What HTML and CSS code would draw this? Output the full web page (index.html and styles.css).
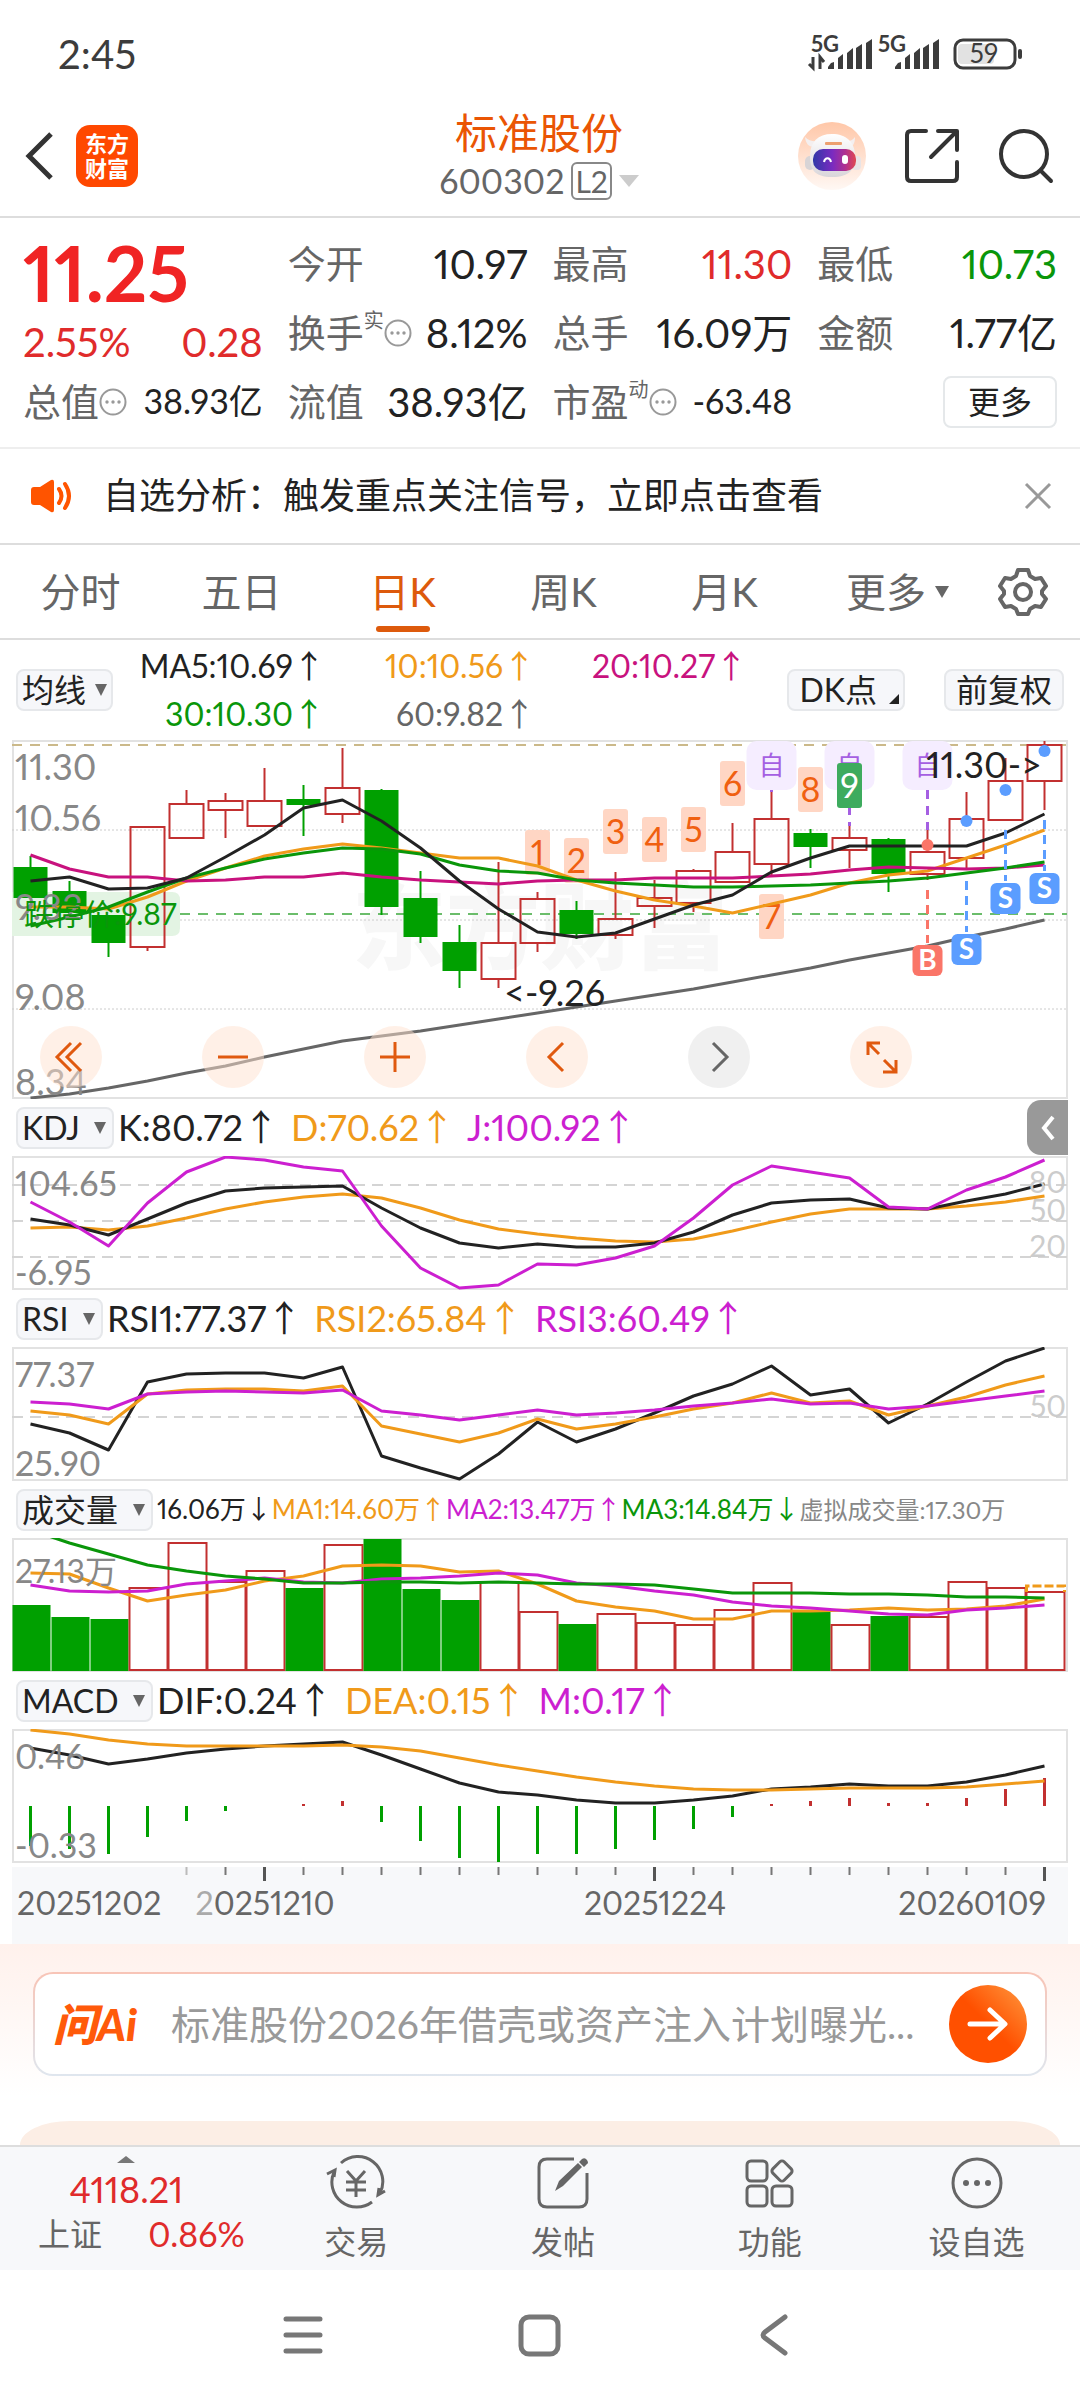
FILE: index.html
```html
<!DOCTYPE html>
<html lang="zh-CN">
<head>
<meta charset="utf-8">
<meta name="viewport" content="width=device-width">
<title>标准股份 600302</title>
<link rel="stylesheet" href="styles.css">
</head>
<body>
<div class="status">
  <span class="clock">2:45</span>
  <svg class="status-icons" width="214" height="36" viewBox="0 0 214 36" aria-label="5G 59%">
    <g fill="#3c3c3c">
      <text x="1" y="16" class="net">5G</text><text x="68" y="16" class="net">5G</text>
      <path d="M3 21v11l-4-4M10 33V21l4 5" fill="none" stroke="#3c3c3c" stroke-width="3"/>
      <path id="bars" d="M18 33v-2l3-4 3-1v7zM28 33V22l5-4v15zM37 33V17l6-5v21zM46 33V12l6-4v25zM56 33V7l6-4v30z"/>
      <use href="#bars" x="67"/>
    </g>
    <rect x="148" y="8" width="36" height="20" rx="4" fill="#e2e2e2"/>
    <rect x="145" y="4" width="60" height="28" rx="8" fill="none" stroke="#3c3c3c" stroke-width="3"/>
    <rect x="208" y="13" width="4" height="10" rx="2" fill="#3c3c3c"/>
    <text x="174" y="27" class="battery" text-anchor="middle">59</text>
  </svg>
</div>

<header class="header">
  <div class="header-left">
    <button class="icon-btn" aria-label="返回"><svg width="32" height="52" viewBox="0 0 32 52"><path d="M27 4 5 26l22 22" fill="none" stroke="#333" stroke-width="5"/></svg></button>
    <div class="logo">东方<br>财富</div>
  </div>
  <div class="header-mid">
    <h1>标准股份</h1>
    <div class="code">600302<span class="level">L2</span><i class="tri tri-light"></i></div>
  </div>
  <div class="header-right">
    <button class="icon-btn" aria-label="助手">
      <svg width="68" height="68" viewBox="0 0 68 68">
        <defs>
          <linearGradient id="halo" x2="0" y2="1"><stop offset="0" stop-color="#ffc7a8"/><stop offset="1" stop-color="#fff8f4"/></linearGradient>
          <linearGradient id="visor"><stop offset="0" stop-color="#3038a8"/><stop offset=".45" stop-color="#7a2bc0"/><stop offset=".75" stop-color="#b03090"/><stop offset="1" stop-color="#e04850"/></linearGradient>
          <linearGradient id="shell" x2="0" y2="1"><stop offset="0" stop-color="#fff"/><stop offset="1" stop-color="#d9d6da"/></linearGradient>
        </defs>
        <circle cx="34" cy="34" r="34" fill="url(#halo)"/>
        <path d="M7 15c1 8 5 11 11 9l3-5c-6 1-10 0-14-4zM57 15c0 8-3 11-9 9l-3-5c6 1 9 0 12-4z" fill="#f4efef"/>
        <rect x="7" y="34" width="10" height="14" rx="5" fill="#d8d4d6"/><rect x="54" y="34" width="9" height="14" rx="4" fill="#e8e4e6"/>
        <path d="M12 34c0-14 8-22 22-22s23 8 23 22c0 13-5 21-23 21S12 47 12 34z" fill="url(#shell)"/>
        <rect x="15" y="27" width="43" height="22" rx="10" fill="url(#visor)"/>
        <path d="M26 40c1-5 6-5 7 0" fill="none" stroke="#fff" stroke-width="2"/><rect x="44" y="33" width="6" height="9" rx="3" fill="#fff"/>
        <rect x="27" y="20" width="17" height="3" rx="1" fill="#eda070"/>
      </svg>
    </button>
    <button class="icon-btn" aria-label="分享"><svg width="56" height="56" viewBox="0 0 56 56"><path d="M22 3H7q-4 0-4 4v42q0 4 4 4h42q4 0 4-4V34M34 3h19v19M52 4 27 29" fill="none" stroke="#333" stroke-width="4" stroke-linecap="round" stroke-linejoin="round"/></svg></button>
    <button class="icon-btn" aria-label="搜索"><svg width="56" height="56" viewBox="0 0 56 56"><circle cx="26" cy="26" r="23" fill="none" stroke="#333" stroke-width="4"/><path d="m43 43 10 10" stroke="#333" stroke-width="4" stroke-linecap="round"/></svg></button>
  </div>
</header>

<section class="quote">
  <div class="last red">
    <strong>11.25</strong>
    <div class="change"><span>2.55%</span><span>0.28</span></div>
  </div>
  <div class="cell"><span>今开</span><b>10.97</b></div>
  <div class="cell"><span>最高</span><b class="red">11.30</b></div>
  <div class="cell"><span>最低</span><b class="green">10.73</b></div>
  <div class="cell"><span>换手<sup>实</sup><svg class="info"><use href="#more"/></svg></span><b>8.12%</b></div>
  <div class="cell"><span>总手</span><b>16.09万</b></div>
  <div class="cell"><span>金额</span><b>1.77亿</b></div>
  <div class="cell small"><span>总值<svg class="info"><use href="#more"/></svg></span><b>38.93亿</b></div>
  <div class="cell"><span>流值</span><b>38.93亿</b></div>
  <div class="cell small"><span>市盈<sup>动</sup><svg class="info"><use href="#more"/></svg></span><b>-63.48</b></div>
  <div class="cell end"><button class="more-btn">更多</button></div>
</section>
<svg width="0" height="0" class="defs">
  <symbol id="more" viewBox="0 0 28 28"><circle cx="14" cy="14" r="12.5" fill="none" stroke="#999" stroke-width="2"/><g fill="#999"><circle cx="8" cy="14" r="1.7"/><circle cx="14" cy="14" r="1.7"/><circle cx="20" cy="14" r="1.7"/></g></symbol>
</svg>

<section class="notice">
  <svg width="42" height="36" viewBox="0 0 42 36"><path d="M0 12q0-3 3-3h6L20 2q3-1 3 2v28q0 3-3 2L9 27H3q-3 0-3-3z" fill="#ff5400"/><path d="M28 11q5 7 0 14M34 6q8 12 0 24" fill="none" stroke="#ff5400" stroke-width="4" stroke-linecap="round"/></svg>
  <a href="#analysis">自选分析：触发重点关注信号，立即点击查看</a>
  <button class="icon-btn" aria-label="关闭"><svg width="28" height="28" viewBox="0 0 28 28"><path d="m2 2 24 24M26 2 2 26" stroke="#999" stroke-width="3"/></svg></button>
</section>

<nav class="tabs">
  <button>分时</button><button>五日</button><button class="on">日K</button><button>周K</button><button>月K</button>
  <button>更多<i class="tri"></i></button>
  <button class="gear" aria-label="设置"><svg width="50" height="50" viewBox="0 0 50 50"><g fill="none" stroke="#666" stroke-width="4" stroke-linejoin="round"><path d="M20 3h10l2 6 5 3 6-1 5 8-4 5v3l4 5-5 8-6-1-5 3-2 5H20l-2-5-5-3-6 1-5-8 4-5v-3l-4-5 5-8 6 1 5-3z"/><circle cx="25" cy="25" r="8"/></g></svg></button>
</nav>

<section class="ma">
  <label class="pick"><select aria-label="均线"><option>均线</option></select></label>
  <div class="ma-values">
    <span>MA5:10.69<i class="arr">↑</i></span><span class="orange">10:10.56<i class="arr">↑</i></span><span class="magenta">20:10.27<i class="arr">↑</i></span>
    <span class="green">30:10.30<i class="arr">↑</i></span><span class="grey">60:9.82<i class="arr">↑</i></span>
  </div>
  <button class="chip chip-corner">DK点</button>
  <button class="chip">前复权</button>
</section>

<main class="charts">
  <div class="kline">
    <svg id="kline" viewBox="12 10 1056 359"></svg>
    <div class="tools">
      <button aria-label="最早"><svg viewBox="0 0 62 62"><path d="M31 17 17 31l14 14M41 17 27 31l14 14"/></svg></button>
      <button aria-label="缩小"><svg viewBox="0 0 62 62"><path d="M16 31h30"/></svg></button>
      <button aria-label="放大"><svg viewBox="0 0 62 62"><path d="M16 31h30M31 16v30"/></svg></button>
      <button aria-label="左移"><svg viewBox="0 0 62 62"><path d="M37 17 23 31l14 14"/></svg></button>
      <button class="off" aria-label="右移"><svg viewBox="0 0 62 62"><path d="m25 17 14 14-14 14"/></svg></button>
      <button aria-label="全屏"><svg viewBox="0 0 62 62"><path d="M18 29V17h12M18 17l11 11M46 34v12H33M46 46 34 34"/></svg></button>
    </div>
  </div>

  <div class="ind">
    <label class="pick"><select aria-label="指标一"><option>KDJ</option></select></label>
    <span>K:80.72<i class="arr">↑</i></span><span class="orange">D:70.62<i class="arr">↑</i></span><span class="violet">J:100.92<i class="arr">↑</i></span>
    <button class="drawer" aria-label="展开"><svg width="16" height="28" viewBox="0 0 16 28"><path d="M13 3 4 14l9 11" fill="none" stroke="#fff" stroke-width="4"/></svg></button>
  </div>
  <svg id="kdj" viewBox="12 0 1056 134"></svg>

  <div class="ind">
    <label class="pick"><select aria-label="指标二"><option>RSI</option></select></label>
    <span>RSI1:77.37<i class="arr">↑</i></span><span class="orange">RSI2:65.84<i class="arr">↑</i></span><span class="violet">RSI3:60.49<i class="arr">↑</i></span>
  </div>
  <svg id="rsi" viewBox="12 0 1056 134"></svg>

  <div class="ind ind-tight">
    <label class="pick"><select aria-label="指标三"><option>成交量</option></select></label>
    <span>16.06万<i class="arr">↓</i></span><span class="orange">MA1:14.60万<i class="arr">↑</i></span><span class="violet">MA2:13.47万<i class="arr">↑</i></span><span class="green">MA3:14.84万<i class="arr">↓</i></span><span class="est">虚拟成交量:17.30万</span>
  </div>
  <svg id="vol" viewBox="12 0 1056 134"></svg>

  <div class="ind">
    <label class="pick"><select aria-label="指标四"><option>MACD</option></select></label>
    <span>DIF:0.24<i class="arr">↑</i></span><span class="orange">DEA:0.15<i class="arr">↑</i></span><span class="violet">M:0.17<i class="arr">↑</i></span>
  </div>
  <svg id="macd" viewBox="12 0 1056 134"></svg>
  <svg id="axis" class="axis" viewBox="12 0 1056 77"></svg>
</main>

<section class="ai">
  <form class="ask">
    <label class="ask-logo" for="ask">问Ai</label>
    <input id="ask" type="text" placeholder="标准股份2026年借壳或资产注入计划曝光...">
    <button type="button" aria-label="提问"><svg width="42" height="36" viewBox="0 0 42 36"><path d="M3 18h34M23 4l15 14-15 14" fill="none" stroke="#fff" stroke-width="5" stroke-linecap="round" stroke-linejoin="round"/></svg></button>
  </form>
  <div class="card-top"></div>
</section>

<nav class="dock">
  <a class="index" href="#sh">
    <i class="tri-up"></i>
    <span class="index-value red">4118.21</span>
    <span class="index-row"><span>上证</span><span class="red pct">0.86%</span></span>
  </a>
  <a href="#trade"><svg width="60" height="56" viewBox="0 0 60 56"><g fill="none" stroke="#666" stroke-width="3"><path d="M15 8A25 25 0 0 1 54 38M46 47A25 25 0 0 1 8 17"/><path d="m1 19 8-4-1 7M59 36l-7 4 1-7"/><path d="m21 16 9 10 9-10M20 27h20M20 35h20M30 26v16"/></g></svg>交易</a>
  <a href="#post"><svg width="60" height="56" viewBox="0 0 60 56"><path d="M41 4H14q-8 0-8 8v32q0 8 8 8h32q8 0 8-8V18" fill="none" stroke="#666" stroke-width="3"/><path d="m22 36 4-10 19-18 4 4-19 19zM46 7l3-3q3-2 5 1t0 4l-3 3z" fill="#666"/></svg>发帖</a>
  <a href="#tools"><svg width="60" height="56" viewBox="0 0 60 56"><g fill="none" stroke="#666" stroke-width="3"><rect x="7" y="6" width="20" height="20" rx="4"/><rect x="7" y="31" width="20" height="20" rx="4"/><rect x="32" y="31" width="20" height="20" rx="4"/><rect x="34" y="8" width="16" height="16" rx="3" transform="rotate(45 42 16)"/></g></svg>功能</a>
  <a href="#watch"><svg width="60" height="56" viewBox="0 0 60 56"><circle cx="30" cy="28" r="24" fill="none" stroke="#666" stroke-width="3"/><g fill="#666"><circle cx="19" cy="28" r="3"/><circle cx="30" cy="28" r="3"/><circle cx="41" cy="28" r="3"/></g></svg>设自选</a>
</nav>

<footer class="sysnav">
  <button class="icon-btn" aria-label="菜单"><svg width="44" height="44" viewBox="0 0 44 44"><path d="M5 6h34M5 22h34M5 38h34" stroke="#777" stroke-width="5" stroke-linecap="round"/></svg></button>
  <button class="icon-btn" aria-label="主页"><svg width="44" height="44" viewBox="0 0 44 44"><rect x="4" y="4" width="37" height="37" rx="8" fill="none" stroke="#777" stroke-width="5"/></svg></button>
  <button class="icon-btn" aria-label="后退"><svg width="44" height="44" viewBox="0 0 44 44"><path d="M32 4 12 19q-4 3 0 6l20 15" fill="none" stroke="#777" stroke-width="5" stroke-linecap="round"/></svg></button>
</footer>
<script src="charts.js"></script>
</body>
</html>
```
FILE: styles.css
```css
* { box-sizing: border-box; }
body {
  margin: 0;
  background: #fff;
  color: #222;
  font-family: Lato, "Noto Sans CJK SC", sans-serif;
  font-variant-numeric: proportional-nums;
  font-size: 34px;
  line-height: 1.2;
}
button, select, input { font: inherit; color: inherit; margin: 0; padding: 0; border: 0; background: none; }
a { color: inherit; text-decoration: none; }
i { font-style: normal; }
svg { display: block; }
.defs { position: absolute; }
.red { color: #e02b2b; }
.green { color: #0a960a; }
.orange { color: #f09a1a; }
.magenta { color: #c8127e; }
.violet { color: #cc1fd0; }
.grey { color: #666; }
.icon-btn { display: flex; align-items: center; }
.tri { display: inline-block; border: 7px solid transparent; border-top: 12px solid #666; border-bottom: 0; }
.tri-light { border-width: 12px 10px 0; border-top-color: #ccc; }

.status { display: flex; justify-content: space-between; align-items: center; height: 108px; padding: 0 56px 0 58px; }
.clock { font-size: 40px; color: #3c3c3c; }
.status-icons { overflow: visible; }
.net { font-size: 22px; font-weight: 700; }
.battery { font-size: 26px; fill: #3c3c3c; }

.header { display: grid; grid-template-columns: 1fr auto 1fr; align-items: center; height: 110px; padding: 0 26px 14px 24px; border-bottom: 2px solid #ddd; }
.header-left { display: flex; align-items: center; gap: 20px; }
.logo { width: 62px; height: 62px; padding: 6px 0; border-radius: 14px; background: #ff4800; color: #fff; font-size: 22px; font-weight: 700; line-height: 25px; text-align: center; }
.header-mid { display: flex; flex-direction: column; align-items: center; }
.header h1 { margin: 0; font-size: 42px; line-height: 50px; font-weight: 400; color: #ea5504; }
.code { display: flex; align-items: center; gap: 7px; color: #666; line-height: 46px; font-size: 34px; }
.level { border: 2px solid #888; border-radius: 6px; padding: 0 2px; line-height: 34px; font-size: 30px; }
.header-right { display: flex; justify-content: flex-end; align-items: center; gap: 38px; }

.quote { display: grid; grid-template-columns: repeat(4, 1fr); grid-auto-rows: 69px; column-gap: 25px; padding: 11px 23px; border-bottom: 2px solid #eee; }
.last { grid-row: span 2; padding-top: 4px; }
.last strong { display: block; font-size: 76px; line-height: 80px; color: #f02424; }
.change { display: flex; justify-content: space-between; font-size: 40px; line-height: 58px; }
.cell { display: flex; align-items: center; justify-content: space-between; white-space: nowrap; font-size: 38px; }
.cell > span { display: flex; align-items: center; color: #666; }
.cell b { font-weight: 400; font-size: 40px; }
.cell.small b { font-size: 34px; }
.cell sup { align-self: flex-start; font-size: 20px; line-height: 20px; }
.cell.end { justify-content: flex-end; }
.info { width: 28px; height: 28px; }
.more-btn { width: 114px; height: 52px; border: 2px solid #e5e8ea; border-radius: 8px; font-size: 32px; line-height: 48px; }

.notice { display: flex; align-items: center; height: 96px; padding: 0 28px 0 31px; border-bottom: 2px solid #ddd; font-size: 36px; }
.notice a { flex: 1; padding-left: 30px; }

.tabs { display: grid; grid-template-columns: repeat(5, 161fr) 185fr 66fr; height: 95px; padding-right: 24px; border-bottom: 2px solid #ddd; font-size: 40px; color: #666; }
.tabs button { display: flex; align-items: center; justify-content: center; gap: 9px; position: relative; }
.tabs .on { color: #dd5a0c; }
.tabs .on::after { content: ""; position: absolute; bottom: 6px; width: 54px; height: 6px; border-radius: 3px; background: #dd5a0c; }

.pick { display: inline-flex; position: relative; flex: none; }
.pick::after { content: ""; position: absolute; right: 8px; top: 15px; border: 6px solid transparent; border-top: 12px solid #666; border-bottom: 0; pointer-events: none; }
.pick select { appearance: none; height: 42px; padding: 0 32px 0 4px; border: 2px solid #e6e8eb; border-radius: 8px; background: #f6f7fa; font-size: 32px; line-height: 38px; }
.chip { height: 42px; border: 2px solid #e6e8eb; border-radius: 8px; background: #f6f7fa; padding: 0 10px; font-size: 32px; line-height: 38px; }
.ma { display: flex; align-items: center; height: 100px; padding: 0 16px; }
.ma .pick select { padding-right: 24px; }
.ma .pick::after { right: 6px; }
.ma-values { flex: 1; display: grid; grid-template-columns: 211fr 209fr 211fr 40fr; line-height: 48px; font-size: 32px; text-align: right; white-space: nowrap; }
.ma-values span:nth-child(3n+1) { grid-column: 1; }
.chip-corner { position: relative; padding-right: 26px; margin-right: 39px; }
.chip-corner::after { content: ""; position: absolute; right: 4px; bottom: 5px; border: 5px solid #222; border-top-color: transparent; border-left-color: transparent; }
.arr { font-family: "Noto Sans CJK SC", sans-serif; line-height: 1; }

.charts { padding: 0 12px; }
.charts > svg, .kline > svg { width: 100%; height: auto; }
.kline { position: relative; }
.tools { position: absolute; left: 28px; right: 156px; bottom: 11px; display: flex; justify-content: space-between; }
.tools button { width: 62px; height: 62px; border-radius: 50%; background: rgba(255, 225, 208, .5); }
.tools svg { fill: none; stroke: #e0590f; stroke-width: 3; }
.tools .off { background: rgba(226, 226, 226, .5); }
.tools .off svg { stroke: #666; }
.ind { display: flex; align-items: center; height: 57px; padding: 0 0 0 4px; gap: 12px; font-size: 36px; line-height: 55px; white-space: nowrap; }
.ind .pick { margin-right: -8px; }
.ind-tight { font-size: 26px; gap: 0; }
.ind-tight .pick { margin-right: 4px; }
.est { font-size: 24px; color: #888; }
.drawer { margin-left: auto; width: 41px; height: 55px; border-radius: 14px 0 0 14px; background: #999; display: flex; align-items: center; justify-content: center; }
.axis { margin-top: 4px; background: #f7f8fa; }
.lbl { font-size: 34px; fill: #888; }
.price { font-size: 36px; fill: #888; }
.scale { font-size: 30px; fill: #ccc; text-anchor: end; }

.ai { padding: 28px 33px 0; background: linear-gradient(#fff1ec, #fff 152px); }
.ask { display: flex; align-items: center; height: 104px; padding: 0 18px; border: 2px solid transparent; border-radius: 20px; background: linear-gradient(#fff, #fff) padding-box, linear-gradient(#f8c4b6, #dfe6ee) border-box; }
.ask-logo { width: 98px; font-size: 44px; font-weight: 900; font-style: italic; color: #ff5a0a; white-space: nowrap; }
.ask input { flex: 1; min-width: 0; padding-left: 20px; font-size: 39px; outline: 0; }
.ask input::placeholder { color: #999; opacity: 1; }
.ask button { display: flex; align-items: center; justify-content: center; width: 78px; height: 78px; border-radius: 50%; background: linear-gradient(45deg, #ff5000 50%, #ff9a40); }
.card-top { height: 24px; margin: 45px -13px 0; border-radius: 50px 50px 0 0 / 24px 24px 0 0; background: #fceee5; }

.dock { display: grid; grid-template-columns: 253fr repeat(4, 207fr); height: 125px; border-top: 2px solid #ddd; background: #f7f8fa; color: #666; font-size: 32px; }
.dock a { display: flex; flex-direction: column; align-items: center; padding-top: 8px; gap: 12px; }
.dock .index { gap: 0; padding: 9px 0 0; }
.tri-up { border: 9px solid transparent; border-top: 0; border-bottom: 7px solid #777; }
.index-value { font-size: 36px; line-height: 52px; }
.index-row { display: flex; gap: 46px; padding-left: 30px; line-height: 38px; }
.pct { font-size: 34px; }
.sysnav { display: flex; justify-content: center; gap: 192px; padding: 43px 2px 44px 0; }
```
FILE: charts.js
```js
const RED = '#c23030', GREEN = '#00a000', BLACK = '#222', ORANGE = '#f09a1a', VIOLET = '#cc1fd0', MAGENTA = '#c8127e', LEAF = '#0a960a';
const x = i => 30.5 + 39 * i;
const el = (id, html) => { document.getElementById(id).innerHTML = html; };
const line = (ys, color, w = 3) =>
  `<polyline points="${ys.map((y, i) => x(i) + ',' + y).join(' ')}" fill="none" stroke="${color}" stroke-width="${w}" stroke-linejoin="round"/>`;
const seg = (x1, y1, x2, y2, color, w = 2, dash = '') =>
  `<path d="M${x1} ${y1}L${x2} ${y2}" stroke="${color}" stroke-width="${w}" stroke-dasharray="${dash}"/>`;
const text = (tx, ty, s, attrs = 'class="lbl"') => `<text x="${tx}" y="${ty}" ${attrs}>${s}</text>`;
const box = (y, h) => `<rect x="13" y="${y + 1}" width="1054" height="${h - 2}" fill="none" stroke="#e2e2e2" stroke-width="2"/>`;
const dashRow = y => seg(12, y, 1067, y, '#d4d4d4', 2, '11 7');

// [rising, high, body top, body bottom, low]
const candles = [
  [0,126,137,168,168],[0,151,161,183,187],[0,185,185,213,227],[1,97,97,217,221],[1,60,74,108,108],
  [1,63,71,80,108],[1,38,71,96,96],[0,55,69,75,106],[1,18,58,84,93],[0,59,60,177,185],
  [0,141,168,207,213],[0,195,212,241,258],[1,132,213,249,258],[1,162,169,213,222],[0,171,180,204,209],
  [1,142,189,205,209],[1,150,168,176,198],[1,139,141,173,182],[1,93,122,152,152],[1,62,89,134,146],
  [0,99,103,117,138],[1,96,108,120,138],[0,108,109,144,162],[1,99,122,144,150],[1,62,89,128,139],
  [1,28,51,90,90],[1,11,15,51,80]];
const candle = ([up, hi, top, bot, lo], i) => up
  ? seg(x(i), hi, x(i), top, RED) + seg(x(i), bot, x(i), lo, RED) + `<rect x="${x(i) - 17}" y="${top}" width="34" height="${bot - top}" fill="none" stroke="${RED}" stroke-width="2"/>`
  : seg(x(i), hi, x(i), lo, GREEN) + `<rect x="${x(i) - 17}" y="${top}" width="34" height="${bot - top}" fill="${GREEN}"/>`;

const mark = (i, top, n, bg = '#ffd6c4', fg = '#f06010') =>
  `<rect x="${x(i) - 12.5}" y="${top}" width="25" height="45" rx="3" fill="${bg}"/>` + text(x(i), top + 35, n, `text-anchor="middle" font-size="34" fill="${fg}"`);
const own = (i, to) => seg(x(i), 60, x(i), to, '#a55fe2', 3, '9 7') +
  `<rect x="${x(i) - 25}" y="11" width="50" height="49" rx="10" fill="#f5edff"/>` + text(x(i), 45, '自', 'text-anchor="middle" font-size="26" fill="#a55fe2"');
const trade = (i, dot, from, top, s, color) => seg(x(i), from, x(i), top - 2, color, 3, '9 6') +
  `<circle cx="${x(i)}" cy="${dot}" r="6" fill="${color}"/><rect x="${x(i) - 15}" y="${top}" width="30" height="31" rx="6" fill="${color}"/>` +
  text(x(i), top + 25, s, 'text-anchor="middle" font-size="28" font-weight="700" fill="#fff"');

el('kline',
  text(540, 232, '东方财富', 'text-anchor="middle" font-size="94" font-weight="900" fill="#f7f7f7"') +
  box(10, 359) +
  [100, 190, 279].map(y => seg(12, y, 1067, y, '#ccc', 1, '2 2')).join('') +
  seg(12, 15, 1067, 15, '#cbb98a', 2, '10 8') +
  '<path d="M12 162h160q8 0 8 8v28q0 8-8 8H12z" fill="#e3f4e3"/>' + seg(180, 184, 1067, 184, '#6bbd6b', 2, '10 8') +
  candles.map(candle).join('') +
  mark(13, 100, 1) + mark(14, 108, 2) + mark(15, 79, 3) + mark(16, 87, 4) + mark(17, 77, 5) + mark(18, 31, 6) + mark(19, 164, 7) + mark(20, 37, 8) +
  own(19, 62) + own(21, 96) + own(23, 100) + mark(21, 33, 9, '#3eab5e', '#fff') +
  line([368,364,358,351,343,336,327,319,311,306,301,295,289,283,277,271,265,259,252,245,238,230,223,216,207,199,190], '#666') +
  line([177,177,179,167,151,138,126,119,114,118,123,128,128,136,150,161,170,176,183,174,165,153,145,141,128,115,100], ORANGE) +
  line([125,139,147,147,151,150,147,147,143,147,150,152,154,151,150,150,148,148,148,146,144,140,137,138,139,138,135], MAGENTA) +
  line([196,187,177,162,148,138,129,123,118,119,124,135,141,143,150,153,155,157,157,156,155,153,151,148,143,138,132], LEAF) +
  line([151,147,159,158,148,127,105,78,70,91,118,151,179,202,207,203,189,175,165,142,128,116,116,116,116,103,84], BLACK) +
  trade(23, 115, 160, 215, 'B', '#fa7568') + trade(24, 91, 151, 204, 'S', '#5b9dff') + trade(25, 60, 100, 153, 'S', '#5b9dff') + trade(26, 21, 90, 143, 'S', '#5b9dff') +
  [[50, '11.30'], [101, '10.56'], [190, '9.82'], [280, '9.08'], [365, '8.34']].map(([y, s]) => text(15, y, s, 'class="price"')).join('') +
  text(24, 195, '跌停价:9.87', `font-size="30" fill="${LEAF}"`) +
  text(504, 276, '&lt;-9.26', 'font-size="36" fill="#222"') + text(1042, 48, '11.30-&gt;', 'text-anchor="end" font-size="36" fill="#222"'));

el('kdj', box(0, 134) + [29, 65, 101].map(dashRow).join('') +
  line([72,71,74,70,62,53,46,41,38,42,52,64,73,78,82,85,86,83,75,66,58,53,53,53,50,46,40], ORANGE) +
  line([63,69,79,63,47,35,32,31,30,52,72,87,92,88,91,91,87,76,59,47,44,43,52,53,45,38,28], BLACK) +
  line([46,66,90,47,16,1,4,11,15,70,112,132,129,108,109,102,90,62,29,10,16,22,51,53,34,21,4], VIOLET) +
  text(15, 40, '104.65') + text(15, 129, '-6.95') +
  text(1066, 37, '80', 'class="scale"') + text(1066, 65, '50', 'class="scale"') + text(1066, 101, '20', 'class="scale"'));

el('rsi', box(0, 134) + dashRow(70) +
  line([77,86,103,35,27,26,26,31,20,109,121,132,107,75,95,82,66,49,37,19,48,42,76,57,35,14,1], BLACK) +
  line([64,68,77,47,43,42,42,44,39,79,87,95,86,72,82,77,70,62,56,46,56,54,68,59,50,38,29], ORANGE) +
  line([55,57,62,47,45,44,45,46,43,64,68,73,68,63,68,66,63,59,56,52,57,56,62,59,54,49,44], VIOLET) +
  text(15, 40, '77.37') + text(15, 129, '25.90') + text(1066, 70, '50', 'class="scale"'));

const falling = new Set([0, 1, 2, 7, 9, 10, 11, 14, 20, 22]);
const volumes = [67,79,81,50,5,44,33,50,7,1,51,62,44,74,86,76,85,87,72,45,73,87,78,79,44,50,54];
el('vol', box(0, 134) +
  volumes.map((y, i) => falling.has(i)
    ? `<rect x="${x(i) - 18}" y="${y}" width="38" height="${133 - y}" fill="${GREEN}"/>`
    : `<rect x="${x(i) - 18}" y="${y}" width="38" height="${132 - y}" fill="#fff" stroke="${RED}" stroke-width="2"/>`).join('') +
  `<path d="M1026.5 54V48h38v6" fill="none" stroke="${ORANGE}" stroke-width="3" stroke-dasharray="9 3"/>` +
  line([35,36,50,63,57,52,43,38,28,27,28,34,33,46,63,69,73,81,81,73,73,72,70,72,71,68,61], ORANGE) +
  line([47,53,54,53,46,43,40,44,45,41,40,38,35,37,45,48,53,57,64,68,70,73,76,77,72,70,67], VIOLET) +
  line([-8,5,16,27,33,38,41,45,45,44,44,45,44,45,46,46,47,51,55,55,55,56,56,57,59,59,60], LEAF) +
  text(15, 45, '27.13万', 'font-size="32" fill="#888"'));

const bars = [117,120,125,108,92,82,77,75,72,93,112,129,133,125,125,120,111,100,88,75,72,69,74,74,69,60,49];
el('macd', box(0, 134) + bars.map((y, i) => seg(x(i), 77, x(i), y, y > 77 ? GREEN : RED, 3)).join('') +
  line([19,26,35,30,24,20,17,15,13,26,40,54,63,66,71,74,74,71,67,60,58,55,57,57,53,46,37], BLACK) +
  line([1,5,11,15,17,17,17,17,16,18,22,29,36,42,48,53,57,60,61,61,60,59,59,59,58,55,52], ORANGE) +
  text(15, 40, '0.46') + text(15, 129, '-0.33'));

let ticks = '';
for (let i = 4; i <= 26; i++) ticks += i % 10 === 6 ? seg(x(i), 0, x(i), 14, '#555', 3) : seg(x(i), 0, x(i), 8, i === 4 ? '#bbb' : '#777', 2);
const date = 'font-size="32" fill="#666"';
el('axis', ticks + text(17, 48, '20251202', date) +
  text(265, 48, '<tspan fill="#aaa">2</tspan>0251210', date + ' text-anchor="middle"') +
  text(655, 48, '20251224', date + ' text-anchor="middle"') + text(1046, 48, '20260109', date + ' text-anchor="end"'));
```
